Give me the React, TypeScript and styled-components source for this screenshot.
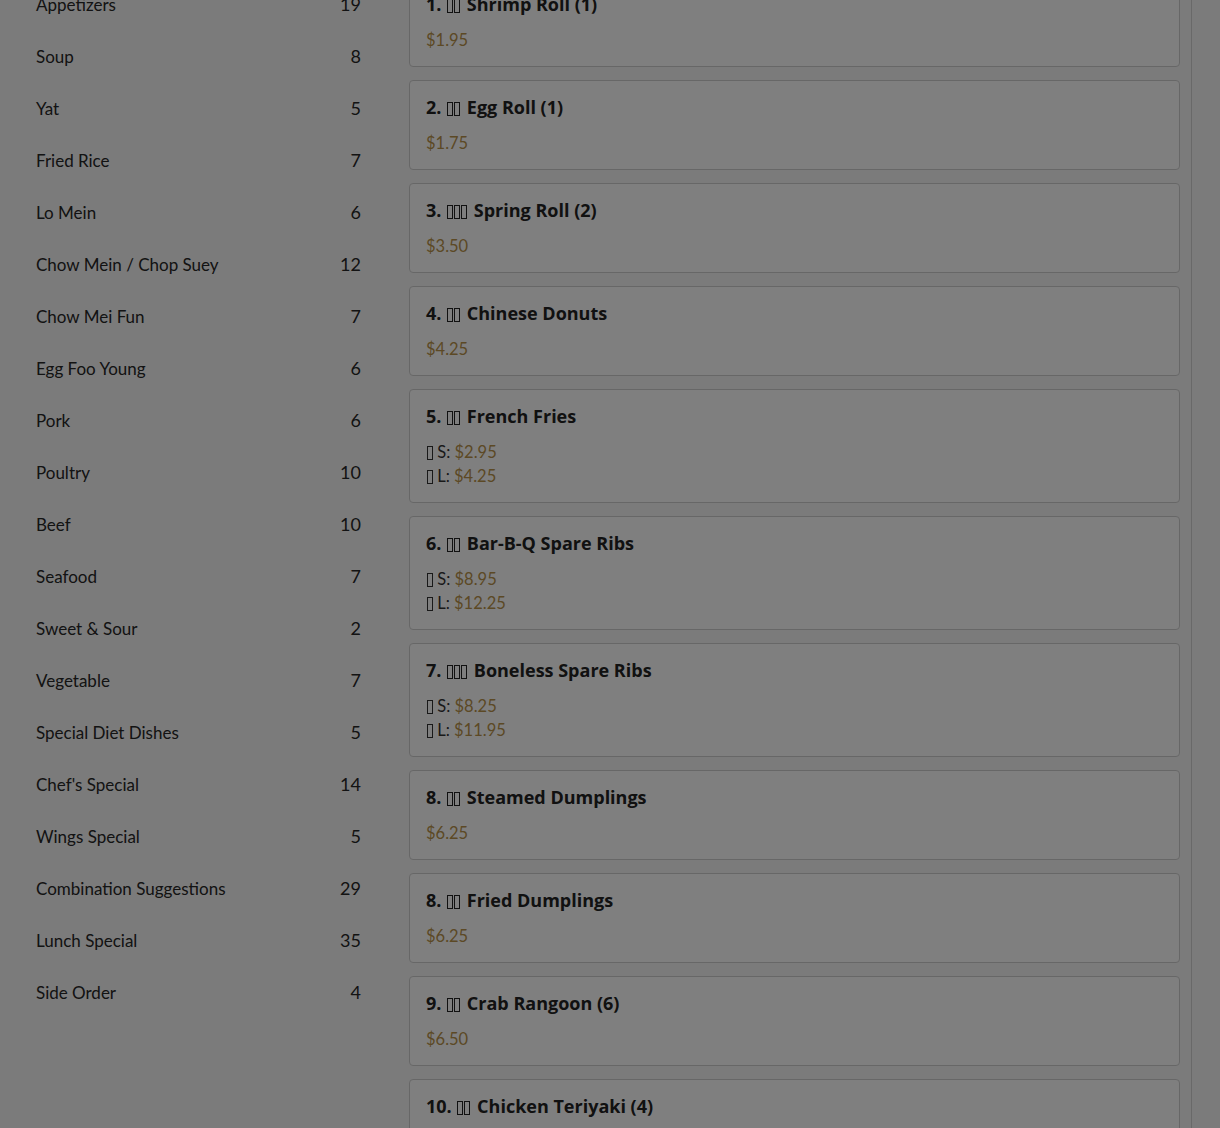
import React from "react";
import styled, { createGlobalStyle } from "styled-components";

const GlobalStyle = createGlobalStyle`
  html, body {
    margin: 0;
    padding: 0;
    background: #f6f6f6;
    font-family: Lato, "Noto Sans", sans-serif;
    color: #222;
    overflow: hidden;
  }
  * { box-sizing: border-box; }
`;

const Page = styled.div`
  display: flex;
  align-items: flex-start;
  gap: 48px;
  padding-left: 36px;
  margin-top: -23px;
  height: 1160px;
`;

const Sidebar = styled.nav`
  width: 325px;
  flex: none;
  display: flex;
  flex-direction: column;
  padding-top: 1px;
`;

const CategoryRow = styled.div`
  height: 52px;
  display: flex;
  align-items: center;
  justify-content: space-between;
  font-size: 17px;
  color: #262626;
`;

const Count = styled.span`
  font-size: 18px;
`;

const MenuColumn = styled.main`
  width: 783px;
  flex: none;
  align-self: stretch;
  border-right: 1px solid #d2d2d2;
  padding-right: 11px;
  display: flex;
  flex-direction: column;
  gap: 13px;
`;

const Card = styled.div`
  background: #fff;
  border: 1px solid #cfcfcf;
  border-radius: 4px;
  padding: 16px 16px 14px;
`;

const Title = styled.div`
  font-family: "Open Sans", Lato, sans-serif;
  font-size: 18px;
  font-weight: 700;
  line-height: 20px;
  margin-bottom: 14px;
  color: #222;
`;

const PriceLine = styled.div`
  font-size: 16.5px;
  line-height: 24px;
  color: #333;
`;

const Price = styled.span`
  color: #b8924a;
`;

const Tofu = styled.span<{ $h: number }>`
  display: inline-block;
  width: 6px;
  height: ${(p) => p.$h}px;
  border: 1px solid currentColor;
  margin: 0 0.5px;
  vertical-align: -2px;
`;

const TofuGroup = styled.span`
  margin-right: 2px;
`;

const Overlay = styled.div`
  position: fixed;
  inset: 0;
  background: rgba(0, 0, 0, 0.5);
`;

const categories: [string, number][] = [
  ["Appetizers", 19],
  ["Soup", 8],
  ["Yat", 5],
  ["Fried Rice", 7],
  ["Lo Mein", 6],
  ["Chow Mein / Chop Suey", 12],
  ["Chow Mei Fun", 7],
  ["Egg Foo Young", 6],
  ["Pork", 6],
  ["Poultry", 10],
  ["Beef", 10],
  ["Seafood", 7],
  ["Sweet & Sour", 2],
  ["Vegetable", 7],
  ["Special Diet Dishes", 5],
  ["Chef's Special", 14],
  ["Wings Special", 5],
  ["Combination Suggestions", 29],
  ["Lunch Special", 35],
  ["Side Order", 4],
];

type Item = {
  num: string;
  cjk: number;
  name: string;
  price?: string;
  small?: string;
  large?: string;
};

const items: Item[] = [
  { num: "1", cjk: 2, name: "Shrimp Roll (1)", price: "$1.95" },
  { num: "2", cjk: 2, name: "Egg Roll (1)", price: "$1.75" },
  { num: "3", cjk: 3, name: "Spring Roll (2)", price: "$3.50" },
  { num: "4", cjk: 2, name: "Chinese Donuts", price: "$4.25" },
  { num: "5", cjk: 2, name: "French Fries", small: "$2.95", large: "$4.25" },
  { num: "6", cjk: 2, name: "Bar-B-Q Spare Ribs", small: "$8.95", large: "$12.25" },
  { num: "7", cjk: 3, name: "Boneless Spare Ribs", small: "$8.25", large: "$11.95" },
  { num: "8", cjk: 2, name: "Steamed Dumplings", price: "$6.25" },
  { num: "8", cjk: 2, name: "Fried Dumplings", price: "$6.25" },
  { num: "9", cjk: 2, name: "Crab Rangoon (6)", price: "$6.50" },
  { num: "10", cjk: 2, name: "Chicken Teriyaki (4)", price: "$6.95" },
];

const Boxes = ({ n, h, gap }: { n: number; h: number; gap?: boolean }) => {
  const boxes = Array.from({ length: n }).map((_, i) => <Tofu key={i} $h={h} />);
  return gap ? <TofuGroup>{boxes}</TofuGroup> : <>{boxes}</>;
};

export default function App() {
  return (
    <>
      <GlobalStyle />
      <Page>
        <Sidebar>
          {categories.map(([name, count]) => (
            <CategoryRow key={name}>
              <span>{name}</span>
              <Count>{count}</Count>
            </CategoryRow>
          ))}
        </Sidebar>
        <MenuColumn>
          {items.map((it, idx) => (
            <Card key={idx}>
              <Title>
                {it.num}. <Boxes n={it.cjk} h={14} gap /> {it.name}
              </Title>
              {it.price ? (
                <PriceLine>
                  <Price>{it.price}</Price>
                </PriceLine>
              ) : (
                <>
                  <PriceLine>
                    <Boxes n={1} h={14} /> S: <Price>{it.small}</Price>
                  </PriceLine>
                  <PriceLine>
                    <Boxes n={1} h={14} /> L: <Price>{it.large}</Price>
                  </PriceLine>
                </>
              )}
            </Card>
          ))}
        </MenuColumn>
      </Page>
      <Overlay />
    </>
  );
}
